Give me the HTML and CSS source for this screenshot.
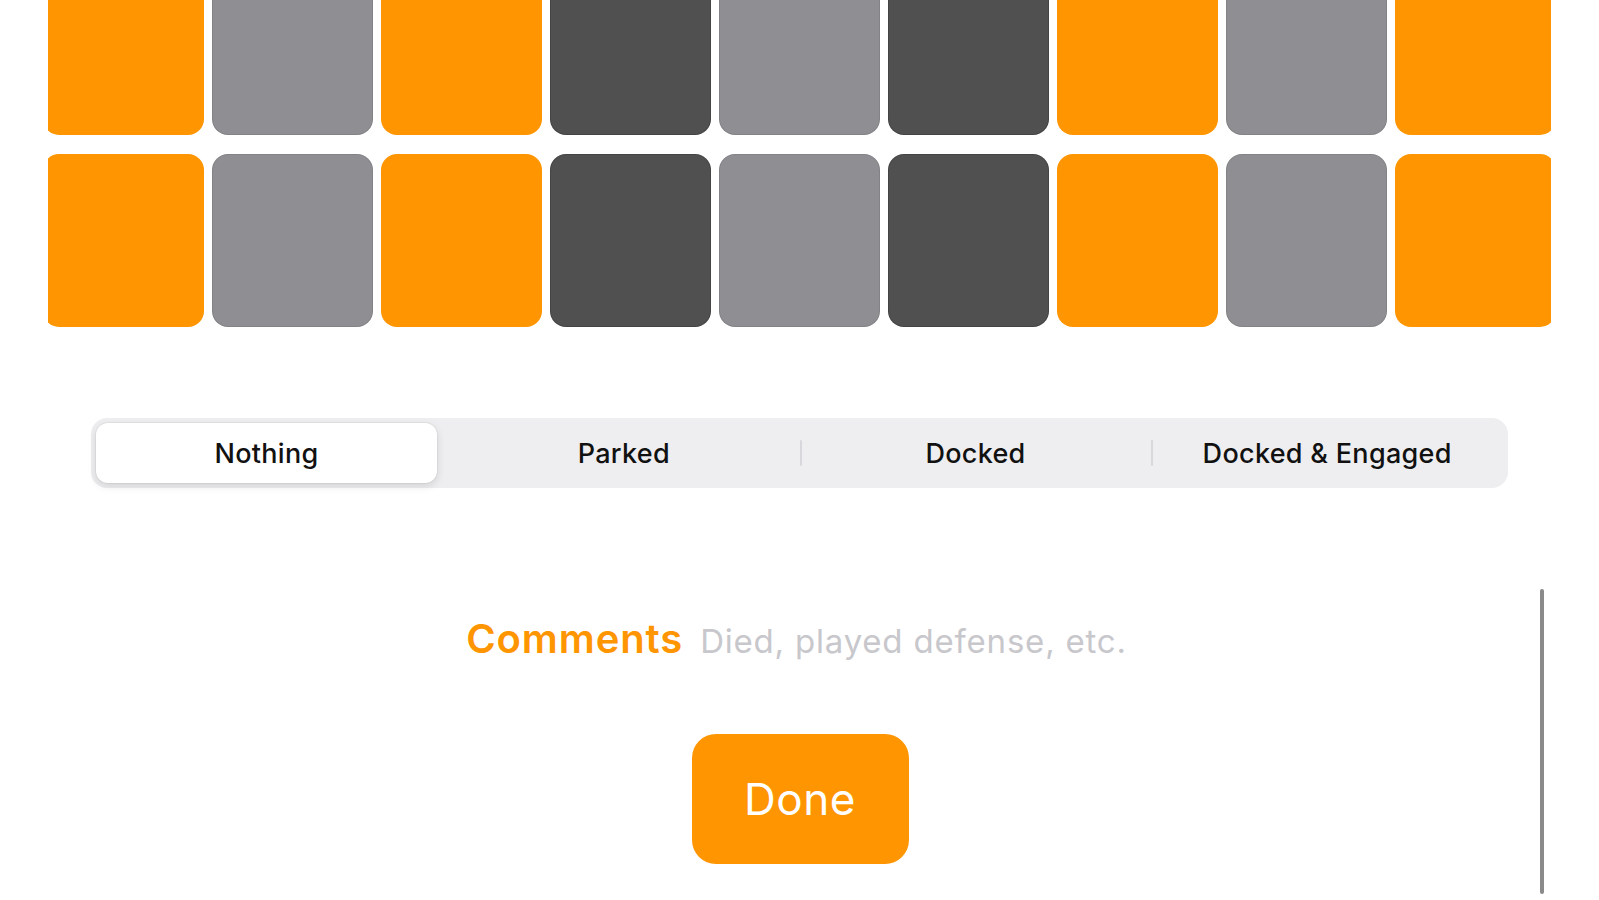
FILE: index.html
```html
<!DOCTYPE html>
<html>
<head>
<meta charset="utf-8">
<link rel="stylesheet" href="styles.css">
</head>
<body>
<div class="screen">
  <div class="grid-clip">
    <div class="grid">
      <div class="tile orange"></div><div class="tile gray"></div><div class="tile orange"></div>
      <div class="tile dark"></div><div class="tile gray"></div><div class="tile dark"></div>
      <div class="tile orange"></div><div class="tile gray"></div><div class="tile orange"></div>
      <div class="tile orange"></div><div class="tile gray"></div><div class="tile orange"></div>
      <div class="tile dark"></div><div class="tile gray"></div><div class="tile dark"></div>
      <div class="tile orange"></div><div class="tile gray"></div><div class="tile orange"></div>
    </div>
  </div>

  <div class="segmented">
    <div class="segment selected">Nothing</div>
    <div class="segment">Parked</div>
    <div class="segment divided">Docked</div>
    <div class="segment divided">Docked &amp; Engaged</div>
  </div>

  <div class="comments">
    <span class="comments-label">Comments</span>
    <span class="comments-placeholder">Died, played defense, etc.</span>
  </div>

  <div class="actions">
    <button class="done">Done</button>
  </div>

  <div class="scrollbar"></div>
</div>
</body>
</html>
```

FILE: styles.css
```css
html, body {
  margin: 0;
  padding: 0;
  background: #ffffff;
}

body {
  font-family: Inter, "Liberation Sans", sans-serif;
  overflow: hidden;
}

.screen {
  position: relative;
  width: 1599px;
  height: 900px;
  overflow: hidden;
  display: flex;
  flex-direction: column;
}

.grid-clip {
  margin: -38px 48px 0 48px;
  overflow: hidden;
}

.grid {
  margin: 0 -5px;
  display: grid;
  grid-template-columns: repeat(9, 161px);
  grid-auto-rows: 173px;
  column-gap: 8px;
  row-gap: 19px;
}

.tile {
  border-radius: 16px;
}

.orange { background: #ff9500; }
.gray { background: #8e8e93; box-shadow: inset 0 0 0 1px rgba(0,0,0,0.08); }
.dark { background: #505050; box-shadow: inset 0 0 0 1px rgba(0,0,0,0.15); }

.segmented {
  margin: 91px 91px 0 91px;
  height: 70px;
  box-sizing: border-box;
  padding: 5px;
  background: #eeeef0;
  border-radius: 16px;
  display: flex;
}

.segment {
  flex: 1 1 0;
  display: flex;
  align-items: center;
  justify-content: center;
  font-size: 27px;
  font-weight: 500;
  letter-spacing: 0.3px;
  color: #111;
  position: relative;
}

.segment.selected {
  flex: 0 0 341px;
  margin-right: 11px;
  background: #ffffff;
  border-radius: 12px;
  box-shadow: 0 3px 8px rgba(0,0,0,0.12), 0 0 0 1px rgba(0,0,0,0.04);
}

.segment.divided::before {
  content: "";
  position: absolute;
  left: 0;
  top: 17px;
  bottom: 17px;
  width: 2px;
  background: #d8d8dc;
  border-radius: 1px;
}

.comments {
  margin-top: 128px;
  height: 46px;
  line-height: 46px;
  display: flex;
  justify-content: center;
  align-items: baseline;
  gap: 17px;
  padding-right: 6px;
}

.comments-label {
  font-size: 40px;
  font-weight: 600;
  letter-spacing: 0.9px;
  color: #ff9500;
}

.comments-placeholder {
  font-size: 33px;
  font-weight: 400;
  letter-spacing: 0.8px;
  color: #c7c7cc;
}

.actions {
  margin-top: 72px;
  display: flex;
  justify-content: center;
}

.done {
  width: 217px;
  height: 130px;
  border: none;
  border-radius: 24px;
  background: #ff9500;
  color: #ffffff;
  font-family: Inter, "Liberation Sans", sans-serif;
  font-size: 44px;
  font-weight: 400;
  letter-spacing: 0.5px;
  padding: 0;
  margin-left: 1px;
}

.scrollbar {
  position: absolute;
  left: 1540px;
  top: 589px;
  width: 4px;
  height: 305px;
  border-radius: 2px;
  background: #8a8a8a;
}
```
